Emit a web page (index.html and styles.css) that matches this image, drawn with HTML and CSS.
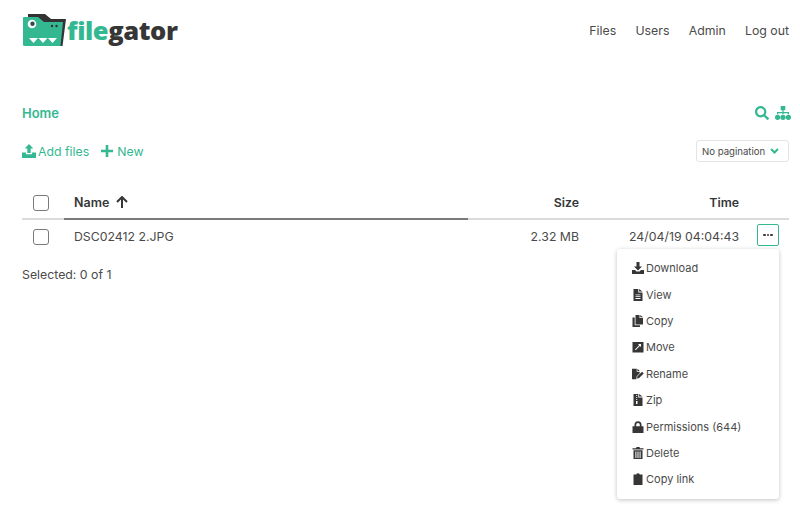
FILE: index.html
```html
<!DOCTYPE html>
<html lang="en">
<head>
<meta charset="utf-8">
<title>FileGator</title>
<link rel="stylesheet" href="styles.css">
</head>
<body>
<nav class="nav">
  <a class="brand">
    <svg class="logo" viewBox="0 0 44 32" width="44" height="32">
      <path fill="#333" d="M6 0H23l6 5H44l-3.500 27H30V8H6z"/>
      <path fill="#34b891" d="M2 3H16l6 5H41L38.500 32H2.500A1.500 1.500 0 0 1 1 30.500V4A1 1 0 0 1 2 3z"/>
      <circle cx="10" cy="10" r="4.300" fill="#fff"/>
      <circle cx="10.500" cy="9.800" r="2.200" fill="#2f4f46"/>
      <circle cx="30" cy="12" r="1.200" fill="#333"/>
      <circle cx="34.500" cy="12" r="1.200" fill="#333"/>
      <path fill="#fff" d="M7 24h9l-4.500 5zM16.500 24h9l-4.500 5zM26 24h9l-4.500 5z"/>
    </svg>
    <span class="word">file<span class="word-dark">gator</span></span>
  </a>
  <div class="links">
    <a>Files</a><a>Users</a><a>Admin</a><a>Log out</a>
  </div>
</nav>

<main class="main">
  <div class="crumbs">
    <a class="home">Home</a>
    <div class="tools">
      <svg viewBox="0 0 512 512" width="14" height="14"><path fill="#34b891" d="M505 442.700 405.300 343c-4.500-4.500-10.600-7-17-7H372c27.600-35.300 44-79.700 44-128C416 93.100 322.900 0 208 0S0 93.100 0 208s93.100 208 208 208c48.300 0 92.700-16.400 128-44v16.300c0 6.400 2.500 12.500 7 17l99.700 99.700c9.400 9.400 24.600 9.400 33.900 0l28.300-28.300c9.400-9.400 9.400-24.600.1-34zM208 336c-70.700 0-128-57.200-128-128 0-70.700 57.200-128 128-128 70.700 0 128 57.200 128 128 0 70.700-57.200 128-128 128z"/></svg>
      <svg viewBox="0 0 16 14" width="16" height="14"><path fill="#34b891" d="M5.700 0h4.600v4.200H8.600v1.900h5.400v2.200h-1.300V7.300H8.600v1h-1.200v-1H3.300v1H2V6.100h5.400V4.200H5.700z"/><circle cx="2.600" cy="11.300" r="2.600" fill="#34b891"/><circle cx="8" cy="11.300" r="2.600" fill="#34b891"/><circle cx="13.400" cy="11.300" r="2.600" fill="#34b891"/></svg>
    </div>
  </div>

  <div class="actions">
    <div class="action-group">
      <a class="action">
        <svg viewBox="0 0 14 14" width="14" height="14"><path fill="#34b891" d="M7 0l4.300 4.500H8.700v4.600H5.300V4.500H2.700z"/><path fill="#34b891" d="M0 8.500h4v1.800h6V8.500h4V14H0z"/></svg>
        Add files
      </a>
      <a class="action action-new">
        <svg viewBox="0 0 12 12" width="12" height="12"><path fill="#34b891" d="M4.700 0h2.600v4.700H12v2.600H7.300V12H4.700V7.300H0V4.700h4.700z"/></svg>
        New
      </a>
    </div>
    <div class="pager">
      <span>No pagination</span>
      <svg viewBox="0 0 10 7" width="9" height="6"><path fill="none" stroke="#34b891" stroke-width="2.400" d="M1 1.200l4 4 4-4"/></svg>
    </div>
  </div>

  <div class="table">
    <div class="row head">
      <span class="cell-check"><span class="box"></span></span>
      <span class="cell-name sorted"><span class="name-label">Name</span>
        <svg viewBox="0 0 12 12" width="12" height="12"><path fill="none" stroke="#363636" stroke-width="2" d="M6 12V1.500M1 6l5-5 5 5"/></svg>
      </span>
      <span class="cell-size">Size</span>
      <span class="cell-time">Time</span>
      <span class="cell-more"></span>
    </div>
    <div class="row body">
      <span class="cell-check"><span class="box"></span></span>
      <span class="cell-name">DSC02412 2.JPG</span>
      <span class="cell-size">2.32 MB</span>
      <span class="cell-time">24/04/19 04:04:43</span>
      <span class="cell-more">
        <button class="more"><i></i><i></i><i></i></button>
      </span>
    </div>

    <ul class="menu">
      <li>
        <svg viewBox="0 0 12 12" width="12" height="12"><path fill="#363636" d="M4.500 0h3v4.500H10L6 8.500 2 4.500h2.500z"/><path fill="#363636" d="M0 8h3l1.500 1.500h3L9 8h3v4H0z"/></svg>
        Download
      </li>
      <li>
        <svg viewBox="0 0 12 12" width="12" height="12"><path fill="#363636" fill-rule="evenodd" d="M1.500 0h4.800v3.400h4.200V12h-9zM7.100 0l3.400 2.600H7.100zM3.500 5.400v.9h5v-.9zM3.500 7.200v.9h5v-.9zM3.500 9v.9h5V9z"/></svg>
        View
      </li>
      <li>
        <svg viewBox="0 0 12 12" width="12" height="12"><path fill="#363636" d="M3.500 0h4v3H11v6.500H3.500zM8.300 0L11 2.200H8.300zM.5 2.500h2.200V10.300h5.300V12H.5z"/></svg>
        Copy
      </li>
      <li>
        <svg viewBox="0 0 12 12" width="12" height="12"><path fill="#363636" fill-rule="evenodd" d="M.5 1h11v10.500H.5zM6 3l1.200 1.200L3 8.500l.7.7 4.100-4.300L9 6V3z"/></svg>
        Move
      </li>
      <li>
        <svg viewBox="0 0 14 12" width="14" height="12"><path fill="#363636" d="M0 0h5.500v3.400H9V5L5.500 8.500 5 12H0zM6.300 0L9 2.600H6.300zM6.300 8.700l5.400-5.400 2 2-5.400 5.400-2.500.5z"/></svg>
        Rename
      </li>
      <li>
        <svg viewBox="0 0 12 12" width="12" height="12"><path fill="#363636" fill-rule="evenodd" d="M1.500 0h4.800v3.400h4.200V12h-9zM7.100 0l3.400 2.600H7.100zM4.200 1v1h1V1zM4.200 3v1h1V3zM4.200 5v1h1V5zM4 7v3h1.500V7z"/></svg>
        Zip
      </li>
      <li>
        <svg viewBox="0 0 12 12" width="12" height="12"><path fill="#363636" fill-rule="evenodd" d="M.5 5.200h2V3.700a3.500 3.500 0 0 1 7 0v1.500h2V12H.5zM4.200 5.200h3.600V3.700a1.800 1.800 0 0 0-3.600 0z"/></svg>
        Permissions (644)
      </li>
      <li>
        <svg viewBox="0 0 12 12" width="12" height="12"><path fill="#363636" fill-rule="evenodd" d="M.5 1.200H4L4.500 0h3L8 1.200h3.500v1.300H.5zM1.500 3.200h9V12h-9zM3.400 4.500V11h1V4.500zM5.500 4.500V11h1V4.500zM7.600 4.500V11h1V4.500z"/></svg>
        Delete
      </li>
      <li>
        <svg viewBox="0 0 12 12" width="12" height="12"><path fill="#363636" d="M1.500 1.500h2.700a1.900 1.900 0 0 1 3.600 0h2.700V12h-9z"/></svg>
        Copy link
      </li>
    </ul>
  </div>

  <p class="selected">Selected: 0 of 1</p>
</main>
</body>
</html>
```

FILE: styles.css
```css
* { box-sizing: border-box; }
html, body { margin: 0; padding: 0; }
body {
  width: 800px;
  height: 508px;
  overflow: hidden;
  background: #fff;
  color: #4a4a4a;
  font-family: Inter, "Liberation Sans", sans-serif;
  font-size: 12.300px;
}
.nav {
  height: 60px;
  display: flex;
  align-items: center;
  justify-content: space-between;
  padding: 0 11px 0 22px;
}
.brand { display: flex; align-items: center; gap: 1px; }
.word {
  font-family: "Open Sans", sans-serif;
  font-weight: 800;
  font-size: 25.500px;
  letter-spacing: -0.4px;
  color: #34b891;
  line-height: 32px;
}
.word-dark { color: #363636; }
.links { display: flex; gap: 19.300px; }
.main { padding: 0 11px 0 22px; }
.crumbs {
  display: flex;
  justify-content: space-between;
  align-items: center;
  height: 20px;
  margin-top: 43px;
}
.home { color: #34b891; font-weight: 600; font-size: 13px; }
.tools { display: flex; gap: 6px; align-items: center; margin-right: -2px; }
.actions {
  display: flex;
  justify-content: space-between;
  align-items: center;
  height: 24px;
  margin-top: 16px;
}
.action-group { display: flex; gap: 12px; }
.action {
  display: flex;
  align-items: center;
  gap: 2px;
  color: #34b891;
}
.action-new { gap: 4px; }
.pager {
  width: 93px;
  height: 22px;
  display: flex;
  align-items: center;
  justify-content: space-between;
  padding: 0 9px 0 5px;
  border: 1px solid #e4e4e4;
  border-radius: 3px;
  font-size: 9.600px;
}
.table { position: relative; margin-top: 25px; }
.row { display: flex; align-items: center; }
.head {
  height: 32px;
  padding-bottom: 2px;
  color: #363636;
  font-weight: 600;
  border-bottom: 2px solid #dbdbdb;
}
.body { height: 34px; padding-bottom: 2px; }
.cell-check { width: 42px; display: flex; padding-left: 11px; }
.box {
  width: 16px;
  height: 16px;
  border: 1.500px solid #7a7a7a;
  border-radius: 3px;
  margin-top: 2px;
}
.cell-name {
  width: 404px;
  height: 100%;
  padding-left: 10px;
  display: flex;
  align-items: center;
  gap: 7px;
}
.name-label { font-size: 12.500px; }
.sorted { border-bottom: 2px solid #7a7a7a; height: 32px; margin-bottom: -2px; align-self: flex-start; padding-bottom: 2px; }
.cell-size { width: 111px; text-align: right; }
.cell-time { width: 160px; text-align: right; }
.cell-more { flex: 1; display: flex; justify-content: flex-end; padding-right: 10px; }
.more {
  width: 22px;
  height: 22px;
  padding: 0;
  margin-top: -2px;
  display: flex;
  align-items: center;
  justify-content: center;
  gap: 1px;
  background: #fff;
  border: 1px solid #34b891;
  border-radius: 2px;
}
.more i { width: 2.500px; height: 2.500px; border-radius: 50%; background: #363636; }
.menu {
  position: absolute;
  top: 61px;
  right: 10px;
  width: 162px;
  height: 250px;
  margin: 0;
  padding: 6px 0;
  list-style: none;
  background: #fff;
  border-radius: 3px;
  box-shadow: 0 1px 4px rgba(10, 10, 10, .25);
  font-size: 11px;
}
.menu li {
  height: 26.400px;
  display: flex;
  align-items: center;
  gap: 2px;
  padding-left: 15px;
}
.menu svg { flex: none; width: 12px; }
.selected { margin: 13px 0 0; }
```
